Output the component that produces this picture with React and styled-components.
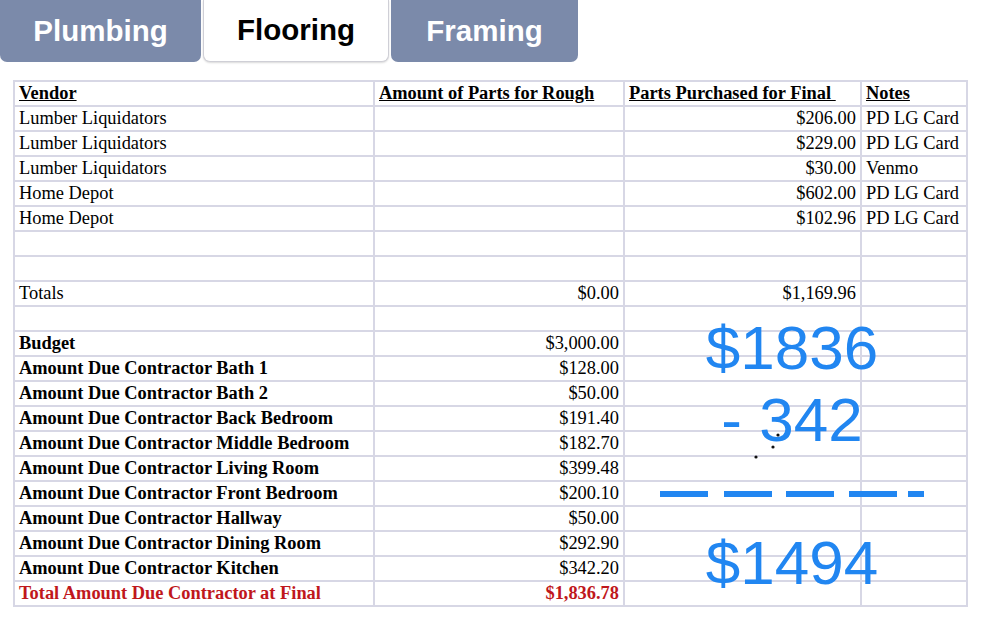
import React from "react";
import styled, { createGlobalStyle } from "styled-components";

const Global = createGlobalStyle`
  html, body { margin: 0; padding: 0; background: #ffffff; }
  body { width: 986px; height: 634px; overflow: hidden; }
`;

const Page = styled.div`
  position: relative;
  width: 986px;
  height: 634px;
  background: #fff;
`;

const TabBar = styled.div`
  display: flex;
  gap: 2px;
  height: 62px;
`;

const Tab = styled.div`
  width: ${(p) => p.$w}px;
  height: 62px;
  box-sizing: border-box;
  display: flex;
  align-items: center;
  justify-content: center;
  font-family: "Liberation Sans", Arial, sans-serif;
  font-weight: bold;
  font-size: 29.5px;
  padding-bottom: 1px;
  border-radius: 0 0 7px 7px;
  background: ${(p) => (p.$active ? "#ffffff" : "#7b8aaa")};
  color: ${(p) => (p.$active ? "#000000" : "#ffffff")};
  border: ${(p) => (p.$active ? "1px solid #cfcfd6" : "none")};
  border-top: none;
  box-shadow: ${(p) => (p.$active ? "0 1px 2px rgba(0,0,0,0.15)" : "none")};
`;

const Sheet = styled.div`
  margin: 18px 0 0 13px;
  width: 955px;
  box-sizing: border-box;
  display: grid;
  grid-template-columns: 358px 248px 235px 104px;
  grid-auto-rows: 23px;
  gap: 2px;
  padding: 2px;
  background: #d7d7e5;
`;

const Cell = styled.div`
  background: #fff;
  font-family: "Liberation Serif", "Times New Roman", serif;
  font-size: 18.4px;
  line-height: 22px;
  white-space: nowrap;
  overflow: hidden;
  padding: 0 ${(p) => (p.$right ? "4px" : "0")} 0 ${(p) => (p.$right ? "0" : "4px")};
  text-align: ${(p) => (p.$right ? "right" : "left")};
  font-weight: ${(p) => (p.$bold ? "bold" : "normal")};
  text-decoration: ${(p) => (p.$under ? "underline" : "none")};
  color: ${(p) => (p.$red ? "#c0171c" : "#000")};
`;

const Overlay = styled.div`
  position: absolute;
  left: 642px;
  top: 317px;
  width: 300px;
  display: flex;
  flex-direction: column;
  align-items: center;
  font-family: "Liberation Sans", Arial, sans-serif;
  font-size: 62px;
  line-height: 62px;
  color: #2186f1;
  pointer-events: none;
`;

const Ink = styled.div`
  margin-top: ${(p) => p.$mt || 0}px;
  white-space: pre;
`;

const DashLine = styled.svg`
  display: block;
  margin-top: 40px;
  margin-left: 2px;
`;

const Dots = styled.svg`
  position: absolute;
  left: 0;
  top: 0;
  pointer-events: none;
`;

const rows = [
  { c: [["Vendor", { bold: 1, under: 1 }], ["Amount of Parts for Rough", { bold: 1, under: 1 }], ["Parts Purchased for Final\u00a0", { bold: 1, under: 1 }], ["Notes", { bold: 1, under: 1 }]] },
  { c: [["Lumber Liquidators"], [""], ["$206.00", { right: 1 }], ["PD LG Card"]] },
  { c: [["Lumber Liquidators"], [""], ["$229.00", { right: 1 }], ["PD LG Card"]] },
  { c: [["Lumber Liquidators"], [""], ["$30.00", { right: 1 }], ["Venmo"]] },
  { c: [["Home Depot"], [""], ["$602.00", { right: 1 }], ["PD LG Card"]] },
  { c: [["Home Depot"], [""], ["$102.96", { right: 1 }], ["PD LG Card"]] },
  { c: [[""], [""], [""], [""]] },
  { c: [[""], [""], [""], [""]] },
  { c: [["Totals"], ["$0.00", { right: 1 }], ["$1,169.96", { right: 1 }], [""]] },
  { c: [[""], [""], [""], [""]] },
  { c: [["Budget", { bold: 1 }], ["$3,000.00", { right: 1 }], [""], [""]] },
  { c: [["Amount Due Contractor Bath 1", { bold: 1 }], ["$128.00", { right: 1 }], [""], [""]] },
  { c: [["Amount Due Contractor Bath 2", { bold: 1 }], ["$50.00", { right: 1 }], [""], [""]] },
  { c: [["Amount Due Contractor Back Bedroom", { bold: 1 }], ["$191.40", { right: 1 }], [""], [""]] },
  { c: [["Amount Due Contractor Middle Bedroom", { bold: 1 }], ["$182.70", { right: 1 }], [""], [""]] },
  { c: [["Amount Due Contractor Living Room", { bold: 1 }], ["$399.48", { right: 1 }], [""], [""]] },
  { c: [["Amount Due Contractor Front Bedroom", { bold: 1 }], ["$200.10", { right: 1 }], [""], [""]] },
  { c: [["Amount Due Contractor Hallway", { bold: 1 }], ["$50.00", { right: 1 }], [""], [""]] },
  { c: [["Amount Due Contractor Dining Room", { bold: 1 }], ["$292.90", { right: 1 }], [""], [""]] },
  { c: [["Amount Due Contractor Kitchen", { bold: 1 }], ["$342.20", { right: 1 }], [""], [""]] },
  { c: [["Total Amount Due Contractor at Final", { bold: 1, red: 1 }], ["$1,836.78", { right: 1, bold: 1, red: 1 }], [""], [""]] },
];

export default function App() {
  return (
    <Page>
      <Global />
      <TabBar>
        <Tab $w={201}>Plumbing</Tab>
        <Tab $w={186} $active>Flooring</Tab>
        <Tab $w={187}>Framing</Tab>
      </TabBar>
      <Sheet>
        {rows.map((r, i) =>
          r.c.map(([t, o = {}], j) => (
            <Cell
              key={i + "-" + j}
              $bold={o.bold}
              $under={o.under}
              $right={o.right}
              $red={o.red}
            >
              {t}
            </Cell>
          ))
        )}
      </Sheet>
      <Overlay>
        <Ink>$1836</Ink>
        <Ink $mt={10}>- 342</Ink>
        <DashLine width="266" height="6" viewBox="0 0 266 6">
          <rect x="0" y="0" width="48" height="6" fill="#2186f1" />
          <rect x="64" y="0" width="48" height="6" fill="#2186f1" />
          <rect x="126" y="0" width="48" height="6" fill="#2186f1" />
          <rect x="189" y="0" width="48" height="6" fill="#2186f1" />
          <rect x="248" y="0" width="16" height="6" fill="#2186f1" />
        </DashLine>
        <Ink $mt={35}>$1494</Ink>
      </Overlay>
      <Dots width="986" height="634">
        <circle cx="778" cy="435" r="1.6" fill="#111" />
        <circle cx="773" cy="447" r="1.6" fill="#111" />
        <circle cx="756" cy="457" r="1.6" fill="#111" />
      </Dots>
    </Page>
  );
}
